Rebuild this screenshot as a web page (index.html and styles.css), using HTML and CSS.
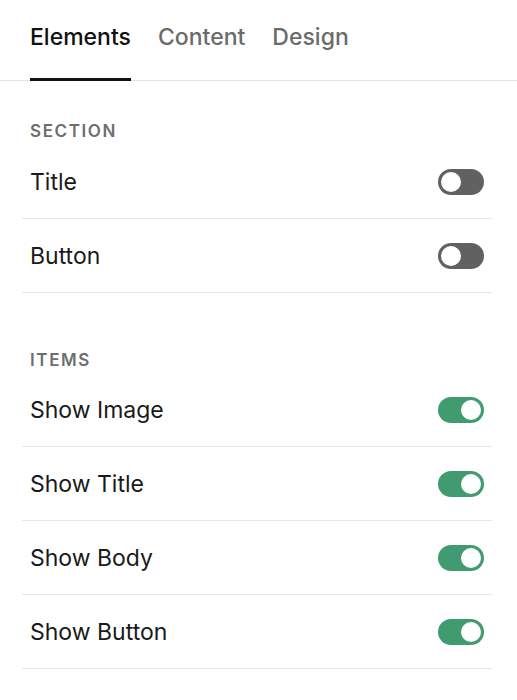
FILE: index.html
```html
<!DOCTYPE html>
<html>
<head>
  <link rel="stylesheet" href="styles.css">
</head>
<body>
  <div class="tabs">
    <div class="tab active">Elements</div>
    <div class="tab">Content</div>
    <div class="tab">Design</div>
  </div>

  <div class="group">
    <div class="group-label">SECTION</div>
    <div class="row">
      <span>Title</span>
      <div class="toggle"><div class="knob"></div></div>
    </div>
    <div class="row">
      <span>Button</span>
      <div class="toggle"><div class="knob"></div></div>
    </div>
  </div>

  <div class="group items">
    <div class="group-label">ITEMS</div>
    <div class="row">
      <span>Show Image</span>
      <div class="toggle on"><div class="knob"></div></div>
    </div>
    <div class="row">
      <span>Show Title</span>
      <div class="toggle on"><div class="knob"></div></div>
    </div>
    <div class="row">
      <span>Show Body</span>
      <div class="toggle on"><div class="knob"></div></div>
    </div>
    <div class="row">
      <span>Show Button</span>
      <div class="toggle on"><div class="knob"></div></div>
    </div>
  </div>
</body>
</html>
```

FILE: styles.css
```css
body {
  margin: 0;
  background: #ffffff;
  font-family: Inter, "Noto Sans", Arial, sans-serif;
  color: #1a1a1a;
}
.tabs {
  display: flex;
  gap: 27px;
  padding-left: 30px;
  height: 80px;
  border-bottom: 1px solid #e3e3e3;
}
.tab {
  display: flex;
  align-items: center;
  height: 78px;
  padding-bottom: 4px;
  box-sizing: border-box;
  font-size: 23px;
  font-weight: 500;
  color: #6b6b6b;
}
.tab.active {
  height: 81px;
  color: #111111;
  border-bottom: 3px solid #111111;
}
.group {
  margin: 0 25px 0 22px;
  padding-top: 40px;
}
.group.items {
  padding-top: 57px;
}
.group.items .group-label {
  margin-bottom: 3px;
}
.group-label {
  padding-left: 8px;
  height: 20px;
  line-height: 20px;
  font-size: 17px;
  font-weight: 600;
  letter-spacing: 1.6px;
  color: #6e6e6e;
  margin-bottom: 4px;
}
.row {
  display: flex;
  align-items: center;
  justify-content: space-between;
  height: 73px;
  padding: 0 8px;
  border-bottom: 1px solid #e6e6e6;
  font-size: 23px;
}
.toggle {
  width: 46px;
  height: 26px;
  border-radius: 13px;
  background: #616161;
  display: flex;
  align-items: center;
  padding: 0 3px;
  box-sizing: border-box;
}
.toggle .knob {
  width: 20px;
  height: 20px;
  border-radius: 50%;
  background: #ffffff;
}
.toggle.on {
  background: #409b70;
  justify-content: flex-end;
}
```
